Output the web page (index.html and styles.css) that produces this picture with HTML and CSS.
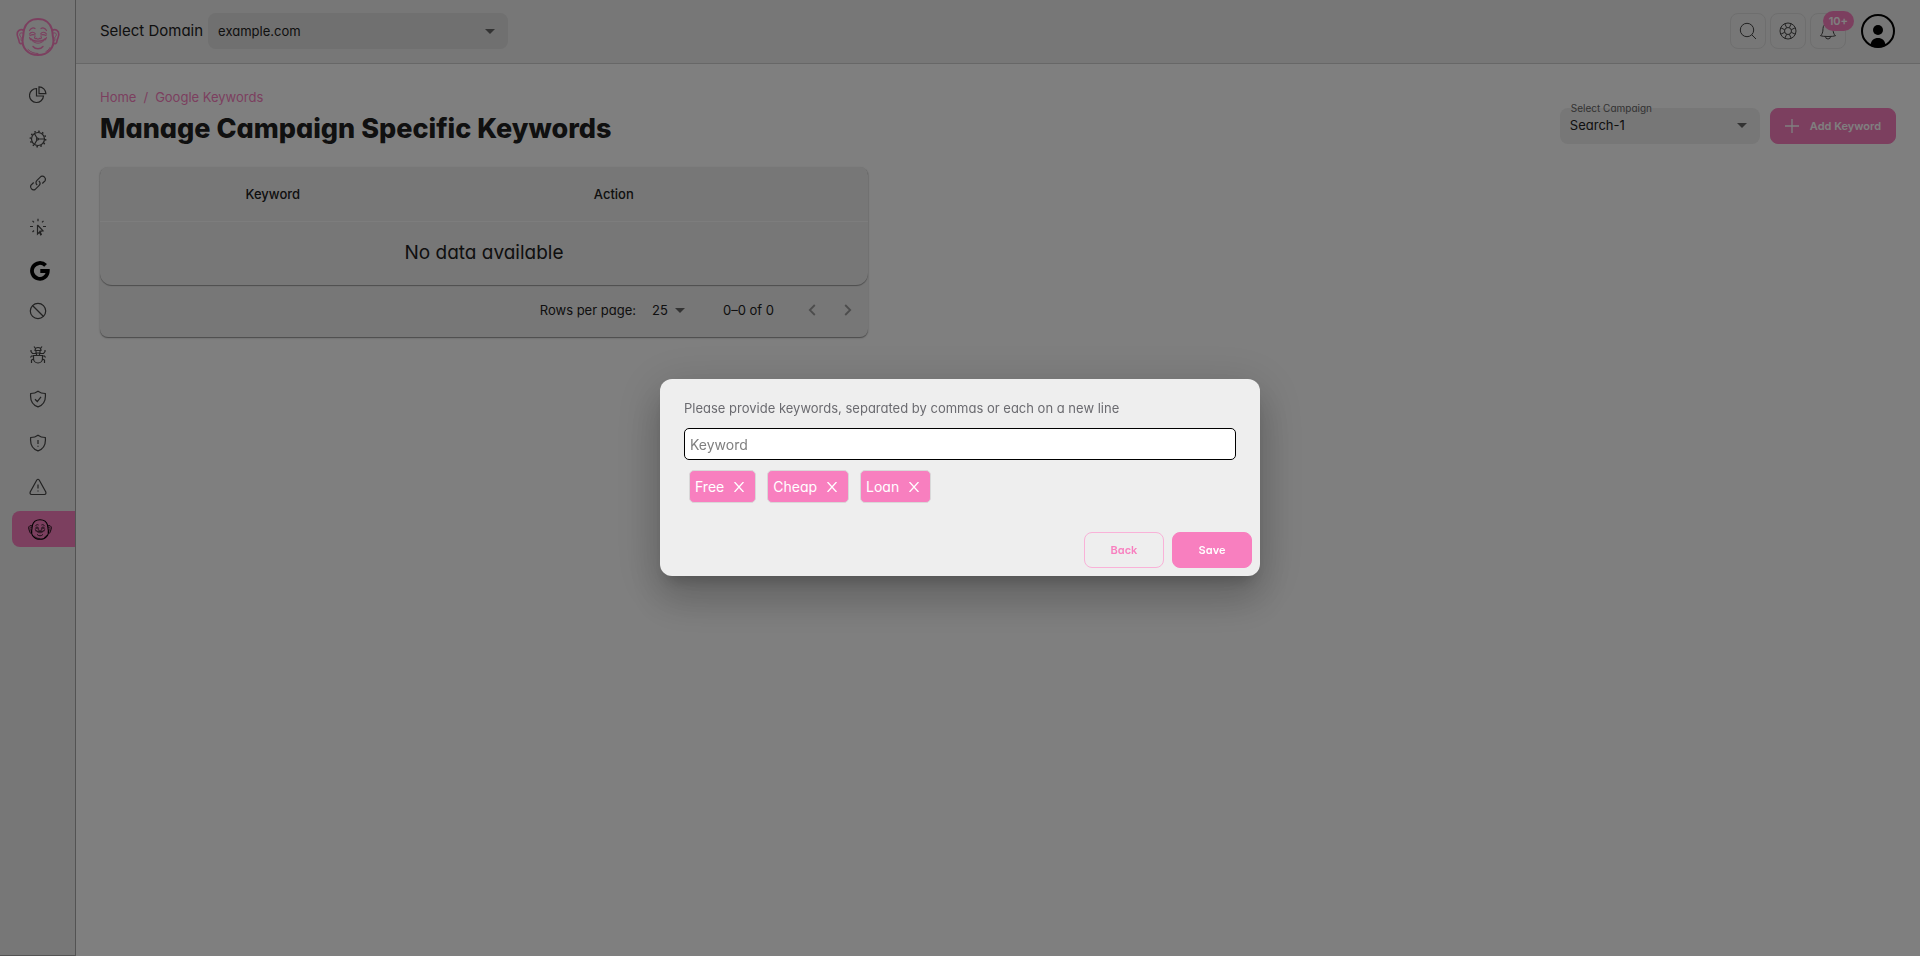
FILE: index.html
```html
<!DOCTYPE html>
<html lang="en">
<head>
<meta charset="utf-8">
<meta name="viewport" content="width=device-width, initial-scale=1">
<title>Manage Campaign Specific Keywords</title>
<link rel="stylesheet" href="styles.css">
</head>
<body>
<svg class="sprite" aria-hidden="true">
  <symbol id="buddha" viewBox="0 0 44 38" fill="none" stroke="currentColor" stroke-linecap="round" stroke-linejoin="round">
    <path stroke-width="2" d="M22 1C14.500 1 9.500 5.500 8 11.500C7.300 14.500 7.600 17 6.800 20C5 29.500 12 37 22 37S39 29.500 37.200 20C36.400 17 36.700 14.500 36 11.500C34.500 5.500 29.500 1 22 1Z"/>
    <path stroke-width="1.600" d="M8 12.500C4.500 10.500 1 12.500 1.200 16.500C1.400 19.500 2.800 20.500 3 23C3.200 25.500 5 26.300 6.500 25M36 12.500C39.500 10.500 43 12.500 42.800 16.500C42.600 19.500 41.200 20.500 41 23C40.800 25.500 39 26.300 37.500 25"/>
    <path stroke-width="1" d="M6.500 15C3.500 14 3 17 4.500 18.500S4.500 21 5.200 22.500M37.500 15C40.500 14 41 17 39.500 18.500S39.500 21 38.800 22.500"/>
    <path stroke-width="1.200" d="M13.500 12.500C15 9.700 17.500 9.500 19 10.500M30.500 12.500C29 9.700 26.500 9.500 25 10.500M13.500 16C15 13.700 18 13.700 19.200 15.700M30.500 16C29 13.700 26 13.700 24.800 15.700M14 17.500C16 16.500 17.500 16.500 19 17M30 17.500C28 16.500 26.500 16.500 25 17M19 18.500C17.700 20.500 19.700 21 20.500 20.300C21.500 21.300 22.500 21.300 23.500 20.300C24.300 21 26.300 20.500 25 18.500"/>
    <path stroke-width="1.400" d="M14.500 20.500C17 24 27 24 29.500 20.500M17 28.500C19.500 31.500 24.500 31.500 27 28.500"/>
    <path stroke-width="1" d="M16.500 23C20 26 24 26 27.500 23M13.500 19.500L14.500 22M30.500 19.500L29.500 22M12 31.500C15 34.500 18.500 35.500 22 35.500M34 29.500C33 31.500 31.500 33 30 33.500"/>
  </symbol>
  <symbol id="caret" viewBox="0 0 10 5"><path fill="currentColor" d="M0 0H10L5 5Z"/></symbol>
  <symbol id="cross" viewBox="0 0 10 10"><path fill="none" stroke="currentColor" stroke-width="1.300" d="M.500 0L9.500 10M9.500 0L.500 10"/></symbol>
</svg>

<div class="app">
  <aside class="sidebar">
    <a class="logo" href="#" aria-label="Home"><svg width="44" height="38"><use href="#buddha"/></svg></a>
    <nav class="nav" aria-label="Main">
      <a class="nav-item" href="#" aria-label="Reports"><svg class="icon" viewBox="0 0 18 18"><path d="M7.500 2.500A7 7 0 1 0 14.500 10H7.500ZM10 .800V7.700H16.900A7 7 0 0 0 10 .800Z"/></svg></a>
      <a class="nav-item" href="#" aria-label="Settings"><svg class="icon" viewBox="0 0 18 18"><circle cx="9" cy="9" r="6.500"/><circle cx="9" cy="9" r="7.700" stroke-width="1.400" stroke-dasharray="1.600 2.430"/><circle cx="8.500" cy="9" r="1"/><path d="M9.500 9H15.500M8 8L5.500 3.700M8 10L5.500 14.300"/></svg></a>
      <a class="nav-item" href="#" aria-label="Links"><svg class="icon" viewBox="0 0 18 18"><path d="M8.200 11.200C6.600 9.600 6.600 7.800 8 6.400L12 2.400A3.200 3.200 0 0 1 16.200 6.600L13.300 9.500M9.800 6.800C11.400 8.400 11.400 10.200 10 11.600L6 15.600A3.200 3.200 0 0 1 1.800 11.400L4.700 8.500"/></svg></a>
      <a class="nav-item" href="#" aria-label="Clicks"><svg class="icon" viewBox="0 0 18 18"><path d="M8.500 7V16L10.500 14L12 17.500M8.500 7L14 12.800L11 13.300L12.500 17M9 .800V3.300M3.500 2.800L5 4.300M14.500 2.800L13 4.300M1 8.500H4M14 8.500H17M3.500 14L5 12.500"/></svg></a>
      <a class="nav-item nav-item--google" href="#" aria-label="Google"><svg width="20" height="20" viewBox="0 0 20 20"><path fill="none" stroke="currentColor" stroke-width="3.800" d="M15.600 4.400A7.900 7.900 0 1 0 17.800 10H10.300"/></svg></a>
      <a class="nav-item" href="#" aria-label="Blocked"><svg class="icon" viewBox="0 0 18 18"><circle cx="9" cy="9" r="7.700"/><path d="M3.500 3.500L14.500 14.500"/></svg></a>
      <a class="nav-item" href="#" aria-label="Bots"><svg class="icon" viewBox="0 0 18 18"><path d="M4.500 9.500H13.500V12.500A4.500 4.500 0 0 1 4.500 12.500ZM6 4.500A3 3 0 0 1 12 4.500ZM7 4.500V7H11V4.500M7.500 7V9.500M10.500 7V9.500M6.500 2.500L5 .500M11.500 2.500L13 .500M7 7.500H3.500L2 5.500V4M11 7.500H14.500L16 5.500V4M4.500 10H2.500L1.500 11.500M13.500 10H15.500L16.500 11.500M4.500 13L2.500 14V17M13.500 13L15.500 14V17"/></svg></a>
      <a class="nav-item" href="#" aria-label="Protection"><svg class="icon" viewBox="0 0 18 18"><path d="M9 1.200C7 2.800 4.500 3.500 1.700 3.500C1 9.500 2.500 14.500 9 16.900C15.500 14.500 17 9.500 16.300 3.500C13.500 3.500 11 2.800 9 1.200ZM6 9.300L8.300 11.500L12 6.800"/></svg></a>
      <a class="nav-item" href="#" aria-label="Threats"><svg class="icon" viewBox="0 0 18 18"><path d="M9 1.200C7 2.800 4.500 3.500 1.700 3.500C1 9.500 2.500 14.500 9 16.900C15.500 14.500 17 9.500 16.300 3.500C13.500 3.500 11 2.800 9 1.200ZM9 6V10M9 11.700V12.700"/></svg></a>
      <a class="nav-item nav-item--alerts" href="#" aria-label="Alerts"><svg class="icon" viewBox="0 0 18 18"><path d="M7.800 2Q9 .500 10.200 2L16.800 14Q17.400 16.300 15.500 16.500H2.500Q.600 16.300 1.200 14ZM9 6.500V10.500M9 12.500V13.500"/></svg></a>
      <a class="nav-item nav-item--active" href="#" aria-label="Keywords" aria-current="page"><svg width="24" height="21"><use href="#buddha"/></svg></a>
    </nav>
  </aside>

  <div class="page">
    <header class="topbar">
      <label class="topbar-label" for="domain">Select Domain</label>
      <div class="select select--domain">
        <select id="domain"><option>example.com</option></select>
        <svg class="caret"><use href="#caret"/></svg>
      </div>
      <div class="tools">
        <button class="tool" type="button" aria-label="Search"><svg class="icon icon--thin" viewBox="0 0 18 18"><circle cx="8" cy="8" r="6.700"/><path d="M12.800 12.800L17 17"/></svg></button>
        <button class="tool" type="button" aria-label="Help"><svg class="icon icon--thin" viewBox="0 0 18 18"><circle cx="9" cy="9" r="8"/><circle cx="9" cy="9" r="3.500"/><path d="M5.800 1.800L7.700 5.700M12.200 1.800L10.300 5.700M5.800 16.200L7.700 12.300M12.200 16.200L10.300 12.300M1.800 5.800L5.700 7.700M1.800 12.200L5.700 10.300M16.200 5.800L12.300 7.700M16.200 12.200L12.300 10.300"/></svg></button>
        <button class="tool" type="button" aria-label="Notifications"><svg class="icon icon--thin" viewBox="0 0 18 18"><path d="M9 1.500A5 5 0 0 0 4 6.500C4 10.500 3 12.500 1.500 13.700Q3.500 14.500 9 14.500T16.500 13.700C15 12.500 14 10.500 14 6.500A5 5 0 0 0 9 1.500ZM6.500 14.500A2.500 2.500 0 0 0 11.500 14.500"/></svg><span class="badge">10+</span></button>
        <button class="avatar" type="button" aria-label="Account"><svg width="34" height="34" viewBox="0 0 34 34"><circle cx="17" cy="17" r="16" fill="none" stroke="currentColor" stroke-width="2"/><circle cx="17" cy="16" r="5"/><path d="M9.500 31C10 26.500 13 24 17 24S24 26.500 24.500 31Q21 33.500 17 33.500T9.500 31Z"/></svg></button>
      </div>
    </header>

    <main class="content">
      <div class="page-head">
        <div>
          <nav class="crumbs" aria-label="Breadcrumb"><a href="#">Home</a><span>/</span><a href="#">Google Keywords</a></nav>
          <h1 class="title">Manage Campaign Specific Keywords</h1>
        </div>
        <div class="actions">
          <div class="select select--campaign">
            <label class="floating-label" for="campaign">Select Campaign</label>
            <select id="campaign"><option>Search-1</option></select>
            <svg class="caret"><use href="#caret"/></svg>
          </div>
          <button class="button" type="button"><svg width="14" height="14" viewBox="0 0 14 14"><path stroke="currentColor" stroke-width="1.300" d="M7 0V14M0 7H14"/></svg>Add Keyword</button>
        </div>
      </div>

      <section class="card">
        <div class="card-table">
          <table class="table">
            <thead><tr><th class="col-keyword" scope="col">Keyword</th><th class="col-action" scope="col">Action</th></tr></thead>
            <tbody><tr><td colspan="2">No data available</td></tr></tbody>
          </table>
        </div>
        <div class="pager">
          <label for="rows">Rows per page:</label>
          <div class="select select--rows">
            <select id="rows"><option>25</option></select>
            <svg class="caret"><use href="#caret"/></svg>
          </div>
          <span class="range">0–0 of 0</span>
          <button class="step" type="button" disabled aria-label="Previous page"><svg width="8" height="12" viewBox="0 0 8 12"><path d="M6.800 1L1.800 6L6.800 11"/></svg></button>
          <button class="step" type="button" disabled aria-label="Next page"><svg width="8" height="12" viewBox="0 0 8 12"><path d="M1.200 1L6.200 6L1.200 11"/></svg></button>
        </div>
      </section>
    </main>
  </div>
</div>

<div class="overlay">
  <form class="modal" role="dialog" aria-modal="true" aria-labelledby="modal-label">
    <div class="modal-body">
      <label class="modal-label" id="modal-label" for="keyword">Please provide keywords, separated by commas or each on a new line</label>
      <input class="modal-input" id="keyword" type="text" placeholder="Keyword">
      <ul class="chips">
        <li class="chip">Free<button type="button" aria-label="Remove Free"><svg><use href="#cross"/></svg></button></li>
        <li class="chip">Cheap<button type="button" aria-label="Remove Cheap"><svg><use href="#cross"/></svg></button></li>
        <li class="chip">Loan<button type="button" aria-label="Remove Loan"><svg><use href="#cross"/></svg></button></li>
      </ul>
    </div>
    <div class="modal-actions">
      <button class="button button--outline" type="button">Back</button>
      <button class="button" type="submit">Save</button>
    </div>
  </form>
</div>
</body>
</html>
```

FILE: styles.css
```css
:root {
  --pink: #f87fbf;
  --surface: #eeeeee;
  --ink: #212121;
}

* { box-sizing: border-box; }

body {
  margin: 0;
  background: #ffffff;
  color: var(--ink);
  font: 14px/20px Inter, "Liberation Sans", sans-serif;
  font-feature-settings: "cv11";
}

button, input, select {
  font: inherit;
  font-feature-settings: inherit;
  color: inherit;
}

button { cursor: pointer; }

.sprite { position: absolute; width: 0; height: 0; }

.app { display: flex; min-height: 100vh; }

.sidebar {
  display: flex;
  flex: 0 0 76px;
  flex-direction: column;
  background: var(--surface);
  border-right: 1px solid #a6a6a6;
  border-bottom: 1px solid #a6a6a6;
}

.logo {
  display: flex;
  justify-content: center;
  padding: 18px 0 21px;
  color: var(--pink);
}

.nav { display: flex; flex-direction: column; }

.nav-item {
  display: flex;
  align-items: center;
  justify-content: center;
  height: 36px;
  margin-bottom: 8px;
  color: #444444;
}

.nav-item--google { margin-bottom: 4px; padding-left: 4px; color: #000000; }
.nav-item--alerts { margin-bottom: 6px; }

.nav-item--active {
  margin-left: 12px;
  padding-right: 7px;
  border-radius: 8px 0 0 8px;
  background: var(--pink);
  color: #000000;
}

.icon {
  width: 18px;
  height: 18px;
  fill: none;
  stroke: currentColor;
  stroke-width: 1.2;
}

.icon--thin { stroke-width: 1; }

.page { flex: 1; min-width: 0; }

.topbar {
  display: flex;
  align-items: center;
  height: 64px;
  padding: 0 24px 1px;
  background: var(--surface);
  border-bottom: 1px solid #cfcfcf;
}

.topbar-label { margin-right: 5px; font-size: 15px; }

.select { position: relative; display: flex; align-items: center; }

.select select {
  width: 100%;
  height: 36px;
  padding: 0 32px 1px 10px;
  border: 0;
  border-radius: 8px;
  appearance: none;
  background: #e0e0e0;
  font-size: 13px;
}

.caret {
  position: absolute;
  right: 13px;
  width: 10px;
  height: 5px;
  color: #666666;
  pointer-events: none;
}

.select--domain { width: 300px; }
.select--campaign { width: 200px; }
.select--campaign select { background: var(--surface); }

.tools { display: flex; align-items: center; gap: 4px; margin-left: auto; padding-right: 1px; }

.tool {
  position: relative;
  display: grid;
  place-items: center;
  width: 36px;
  height: 36px;
  padding: 0;
  border: 1px solid #dddddd;
  border-radius: 8px;
  background: none;
  color: #444444;
}

.badge {
  position: absolute;
  top: -3px;
  right: -9px;
  padding: 0 6px;
  border-radius: 10px;
  background: var(--pink);
  color: #ffffff;
  font-size: 11px;
  font-weight: 600;
}

.avatar {
  display: grid;
  margin-left: 11px;
  padding: 0;
  border: 0;
  background: none;
  color: #000000;
}

.content { padding: 23px 24px; }

.page-head {
  display: flex;
  align-items: center;
  justify-content: space-between;
  margin-bottom: 21px;
}

.crumbs { display: flex; gap: 7px; color: var(--pink); font-size: 13px; }
.crumbs a { color: inherit; text-decoration: none; }

.title { margin: 5px 0 0; font-size: 27px; line-height: 34px; font-weight: 800; }

.actions { display: flex; gap: 10px; padding-top: 18px; }

.floating-label {
  position: absolute;
  top: -10px;
  left: 11px;
  color: #666666;
  font-size: 10px;
}

.button {
  display: flex;
  align-items: center;
  justify-content: center;
  gap: 11px;
  min-width: 80px;
  height: 36px;
  padding: 0 14px;
  border: 1px solid var(--pink);
  border-radius: 8px;
  background: var(--pink);
  color: #ffffff;
  font-size: 11px;
  font-weight: 600;
}

.button--outline { background: none; border-color: #f9b2d8; color: var(--pink); }

.card {
  width: 768px;
  max-width: 100%;
  border-radius: 8px;
  background: var(--surface);
  box-shadow: 0 1px 1px #999999, 0 1px 3px #dddddd;
}

.card-table { border-radius: 8px 8px 12px 12px; box-shadow: 0 1px 1px #999999; }

.table { width: 100%; border-collapse: collapse; text-align: center; }
.table th { height: 54px; padding: 0; border-bottom: 1px solid #fafafa; font-weight: 500; font-size: 13px; }
.table td { height: 64px; padding: 0; font-size: 19px; }
.col-keyword { width: 45%; }
.table .col-action { padding-right: 86px; }

.pager {
  display: flex;
  align-items: center;
  justify-content: flex-end;
  height: 52px;
  padding: 0 8px 2px 0;
  font-size: 13px;
}

.select--rows { width: 54px; margin-right: 33px; }
.select--rows select { padding: 0 0 0 16px; background: none; }
.select--rows .caret { right: 5px; }

.range { margin-right: 26px; }

.step {
  display: grid;
  place-items: center;
  width: 24px;
  height: 24px;
  padding: 0;
  border: 0;
  background: none;
  color: #999999;
}

.step + .step { margin-left: 12px; }
.step path { fill: none; stroke: currentColor; stroke-width: 1.8; }

.overlay {
  position: fixed;
  inset: 0;
  display: grid;
  place-items: center;
  padding-bottom: 1px;
  background: rgba(0, 0, 0, 0.5);
}

.modal {
  width: 600px;
  max-width: 100%;
  border-radius: 12px;
  background: #eeeeee;
  box-shadow: 0 11px 15px -7px rgba(0, 0, 0, 0.2), 0 24px 38px 3px rgba(0, 0, 0, 0.14), 0 9px 46px 8px rgba(0, 0, 0, 0.12);
}

.modal-body { padding: 19px 24px 20px; }

.modal-label { display: block; margin-bottom: 10px; color: #6b6b70; font-size: 13px; }

.modal-input {
  display: block;
  width: 100%;
  height: 32px;
  padding: 0 5px;
  border: 1px solid #000000;
  border-radius: 5px;
  background: #ffffff;
}

.modal-input::placeholder { color: #7f7f7f; }

.chips { display: flex; gap: 11px; margin: 10px 0 9px; padding: 0 5px; list-style: none; }

.chip {
  display: flex;
  align-items: center;
  height: 33px;
  padding: 0 5px;
  border: 1px solid #d8d8d8;
  border-radius: 5px;
  background: var(--pink);
  color: #ffffff;
}

.chip button { display: grid; padding: 0 6px 0 10px; border: 0; background: none; }
.chip svg { width: 10px; height: 10px; }

.modal-actions { display: flex; justify-content: flex-end; gap: 8px; padding: 0 8px 8px; }
```
